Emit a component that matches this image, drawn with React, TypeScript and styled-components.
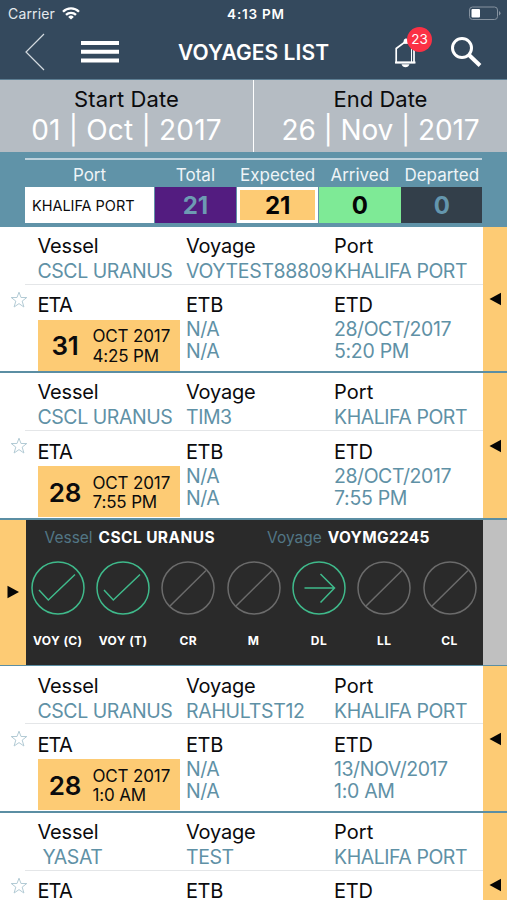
import React from "react";
import styled, { createGlobalStyle, css } from "styled-components";

const GlobalStyle = createGlobalStyle`
  html, body { margin: 0; padding: 0; background: #fff; }
  * { box-sizing: border-box; }
  body { font-family: Inter, Roboto, sans-serif; overflow: hidden; }
`;

const teal = "#6093a8";
const amber = "#fdcb74";

const Screen = styled.div`
  width: 507px;
  height: 900px;
  overflow: hidden;
  background: #fff;
  color: #0b0b0d;
  white-space: nowrap;
`;

const Header = styled.header`
  height: 80px;
  background: #34495d;
  border-bottom: 1px solid #5c7d92;
  color: #fff;
`;

const StatusBar = styled.div`
  display: grid;
  grid-template-columns: 1fr auto 1fr;
  align-items: center;
  height: 27px;
  padding: 0 5px 0 8px;
`;

const Carrier = styled.div`
  display: flex;
  align-items: center;
  gap: 7px;
  font-size: 14px;
  letter-spacing: 0.15px;
  color: #e4e9ee;
`;

const Clock = styled.div`
  font-size: 13.5px;
  font-weight: 600;
  letter-spacing: 0.8px;
  padding-left: 2px;
`;

const BatteryIcon = styled.svg`
  justify-self: end;
`;

const NavBar = styled.div`
  display: flex;
  align-items: center;
  height: 50px;
  padding-left: 24px;
`;

const MenuIcon = styled.svg`
  margin-left: 36px;
`;

const Title = styled.h1`
  margin: 1px 0 0 59px;
  width: 154px;
  font-size: 21px;
  line-height: 26px;
  font-weight: 600;
  letter-spacing: 0.08px;
`;

const BellButton = styled.div`
  position: relative;
  margin-left: 62px;
  width: 24px;
  height: 34px;
`;

const Badge = styled.span`
  position: absolute;
  left: 13px;
  top: -8px;
  width: 25px;
  height: 25px;
  border-radius: 50%;
  background: #fb3145;
  font-size: 13.5px;
  line-height: 25px;
  text-align: center;
`;

const SearchIcon = styled.svg`
  margin-left: 32px;
`;

const DateBar = styled.section`
  display: grid;
  grid-template-columns: 254px 253px;
  height: 72px;
  background: #b5bcc3;
`;

const DateCell = styled.div<{ $divided?: boolean }>`
  padding-top: 5px;
  text-align: center;
  ${(p) => p.$divided && css`border-right: 1.5px solid #fff;`}
`;

const DateLabel = styled.div<{ $track: number }>`
  font-size: 22px;
  line-height: 29px;
  letter-spacing: ${(p) => p.$track}px;
`;

const DateValue = styled.div<{ $track: number }>`
  color: #fff;
  font-size: 28px;
  font-weight: 370;
  line-height: 32px;
  letter-spacing: ${(p) => p.$track}px;
`;

const Summary = styled.section`
  height: 74.6px;
  padding: 6px 25px 0;
  background: ${teal};
`;

const SummaryGrid = styled.div`
  display: grid;
  grid-template-columns: 129px 81.5px 81.5px 81.5px 81px;
  column-gap: 0.7px;
  border-top: 2px solid #bed2dc;
`;

const SummaryLabel = styled.div`
  height: 27px;
  padding-top: 3px;
  color: #eef4f7;
  font-size: 17px;
  line-height: 24px;
  text-align: center;
`;

const PortCell = styled.div`
  height: 36px;
  padding-left: 7px;
  background: #fff;
  font-size: 14.5px;
  letter-spacing: -0.04px;
  line-height: 37px;
`;

const CountCell = styled.div<{ $bg: string; $fg: string; $active?: boolean }>`
  display: flex;
  align-items: center;
  justify-content: center;
  height: 36px;
  background: ${(p) => p.$bg};
  color: ${(p) => p.$fg};
  font-size: 24px;
  font-weight: 700;
  ${(p) => p.$active && css`border: 3px solid #fff;`}
`;

const Row = styled.article`
  display: grid;
  grid-template-columns: 25px 457.5px 24.5px;
  height: 146.6px;
  border-bottom: 2px solid #5b8ea3;
`;

const StarCell = styled.div`
  padding: 64px 0 0 10px;
  line-height: 0;
`;

const RowBody = styled.div``;

const Fields = styled.div<{ $top?: boolean }>`
  display: grid;
  grid-template-columns: 148.5px 148px 1fr;
  height: ${(p) => (p.$top ? 58 : 86)}px;
  padding: ${(p) => (p.$top ? 7.3 : 8.4)}px 0 0 12.5px;
  ${(p) => p.$top && css`border-bottom: 1px solid #e4e6e8;`}
`;

const Field = styled.div`
  min-width: 0;
`;

const FieldLabel = styled.div<{ $track?: number }>`
  font-size: 20px;
  line-height: 25px;
  letter-spacing: ${(p) => p.$track ?? -0.2}px;
`;

const FieldValue = styled.div<{ $track?: number; $indent?: number }>`
  color: #5f91a6;
  font-size: 19.5px;
  font-weight: 370;
  line-height: 24px;
  letter-spacing: ${(p) => p.$track ?? -0.45}px;
  padding-left: ${(p) => p.$indent ?? 0}px;
`;

const TimeValue = styled(FieldValue)`
  line-height: 22px;
`;

const Arrival = styled.div`
  display: grid;
  grid-template-columns: 55px 1fr;
  align-items: center;
  width: 142px;
  height: 51px;
  margin-top: 1.6px;
  background: ${amber};
`;

const Day = styled.div`
  padding-top: 1px;
  text-align: center;
  font-size: 26px;
  font-weight: 600;
  letter-spacing: -0.2px;
`;

const DayTime = styled.div`
  padding-top: 3px;
  font-size: 17px;
  line-height: 19.6px;
  letter-spacing: -0.15px;
`;

const Handle = styled.div<{ $left?: boolean }>`
  background: ${amber};
  padding: ${(p) => (p.$left ? "65.5px 0 0 7px" : "65.5px 0 0 6px")};
  line-height: 0;
`;

const ProgressRow = styled.article`
  display: grid;
  grid-template-columns: 26px 456.5px 24.5px;
  height: 146.6px;
  border-bottom: 1px solid #5b8ea3;
  background: #2a2a2a;
`;

const Spent = styled.div`
  background: #c0c0c0;
`;

const ProgressHead = styled.div`
  display: grid;
  grid-template-columns: 222.5px 1fr;
  padding: 5px 0 0 18.5px;
  height: 38px;
`;

const HeadItem = styled.div`
  display: flex;
  align-items: center;
  gap: 6px;
  height: 26px;
`;

const HeadLabel = styled.span`
  color: #527685;
  font-size: 15.5px;
`;

const HeadValue = styled.span<{ $track: number }>`
  color: #fff;
  font-size: 15.5px;
  font-weight: 700;
  letter-spacing: ${(p) => p.$track}px;
`;

const Steps = styled.div`
  display: grid;
  grid-template-columns: repeat(7, 65.3px);
  margin-left: -0.9px;
`;

const Step = styled.div`
  display: flex;
  flex-direction: column;
  align-items: center;
  padding-top: 3px;
`;

const StepLabel = styled.div`
  margin-top: 17px;
  color: #fff;
  font-size: 12px;
  font-weight: 700;
  line-height: 18px;
  letter-spacing: 0.4px;
`;

type StepKind = "done" | "current" | "none";

const StepIcon = ({ kind }: { kind: StepKind }) => (
  <svg width="54" height="54" viewBox="0 0 54 54" fill="none" strokeWidth="1.5" stroke={kind === "none" ? "#6b6b6b" : "#3fba8b"}>
    <circle cx="27" cy="27" r="26" />
    {kind === "done" && <path d="M8 29l9.3 10L44 13.5" />}
    {kind === "none" && <path d="M9 45L45 9.5" />}
    {kind === "current" && <path d="M12.5 27h29.5M28.5 13L42.5 27l-14 14.5" />}
  </svg>
);

const Star = () => (
  <svg width="18" height="18" viewBox="0 0 18 18" fill="none" stroke="#b3cbd5" strokeWidth="1">
    <path d="M9 1.2l2 5.3h5.8l-4.6 3.6 1.7 5.9L9 12.6 4.1 16l1.7-5.9L1.2 6.5H7z" />
  </svg>
);

const Triangle = ({ right }: { right?: boolean }) => (
  <svg width="12" height="14" viewBox="0 0 12 14" fill="#050505">
    <path d={right ? "M0.5 0.7v12.6L12 7z" : "M12 0.7v12.6L0.5 7z"} />
  </svg>
);

interface Voyage {
  vessel: string;
  indent?: number;
  voyage: string;
  voyageTrack?: number;
  day: string;
  time: string;
  etd: string;
  etdTime: string;
}

const voyages: Voyage[] = [
  { vessel: "CSCL URANUS", voyage: "VOYTEST88809", voyageTrack: -0.35, day: "31", time: "4:25 PM", etd: "28/OCT/2017", etdTime: "5:20 PM" },
  { vessel: "CSCL URANUS", voyage: "TIM3", day: "28", time: "7:55 PM", etd: "28/OCT/2017", etdTime: "7:55 PM" },
  { vessel: "CSCL URANUS", voyage: "RAHULTST12", voyageTrack: -0.3, day: "28", time: "1:0 AM", etd: "13/NOV/2017", etdTime: "1:0 AM" },
  { vessel: "YASAT", indent: 5, voyage: "TEST", day: "28", time: "1:0 AM", etd: "13/NOV/2017", etdTime: "1:0 AM" },
];

const steps: [string, StepKind][] = [
  ["VOY (C)", "done"],
  ["VOY (T)", "done"],
  ["CR", "none"],
  ["M", "none"],
  ["DL", "current"],
  ["LL", "none"],
  ["CL", "none"],
];

const VoyageRow = ({ v }: { v: Voyage }) => (
  <Row>
    <StarCell><Star /></StarCell>
    <RowBody>
      <Fields $top>
        <Field>
          <FieldLabel>Vessel</FieldLabel>
          <FieldValue $indent={v.indent}>{v.vessel}</FieldValue>
        </Field>
        <Field>
          <FieldLabel>Voyage</FieldLabel>
          <FieldValue $track={v.voyageTrack}>{v.voyage}</FieldValue>
        </Field>
        <Field>
          <FieldLabel $track={0.1}>Port</FieldLabel>
          <FieldValue>KHALIFA PORT</FieldValue>
        </Field>
      </Fields>
      <Fields>
        <Field>
          <FieldLabel $track={-0.9}>ETA</FieldLabel>
          <Arrival>
            <Day>{v.day}</Day>
            <DayTime>OCT 2017<br />{v.time}</DayTime>
          </Arrival>
        </Field>
        <Field>
          <FieldLabel $track={-0.4}>ETB</FieldLabel>
          <TimeValue>N/A</TimeValue>
          <TimeValue>N/A</TimeValue>
        </Field>
        <Field>
          <FieldLabel>ETD</FieldLabel>
          <TimeValue>{v.etd}</TimeValue>
          <TimeValue $track={-0.3}>{v.etdTime}</TimeValue>
        </Field>
      </Fields>
    </RowBody>
    <Handle><Triangle /></Handle>
  </Row>
);

export default function App() {
  return (
    <Screen>
      <GlobalStyle />
      <Header>
        <StatusBar>
          <Carrier>
            Carrier
            <svg width="18" height="13" viewBox="0 0 18 13" fill="none" stroke="#fff" strokeWidth="2.3">
              <path d="M1 4.7a11.3 11.3 0 0 1 16 0M4 7.9a7 7 0 0 1 10 0" />
              <path d="M9 12.6L6.2 9.9a4 4 0 0 1 5.6 0z" fill="#fff" stroke="none" />
            </svg>
          </Carrier>
          <Clock>4:13 PM</Clock>
          <BatteryIcon width="34" height="15" viewBox="0 0 34 15" fill="none">
            <rect x="1.500" y="1" width="28" height="12.5" rx="3" stroke="#8693a0" />
            <rect x="3.500" y="3" width="8.500" height="8.500" rx="1" fill="#fff" />
            <path d="M31 5v4.500q1.500-.6 1.500-2.200t-1.500-2.300z" fill="#8693a0" />
          </BatteryIcon>
        </StatusBar>
        <NavBar>
          <svg width="21" height="38" viewBox="0 0 21 38" fill="none" stroke="#d4dae0" strokeWidth="1.2">
            <path d="M20 1L2 19l18 18" />
          </svg>
          <MenuIcon width="38" height="22" viewBox="0 0 38 22" fill="#fff">
            <path d="M0 0h38v4H0zM0 8.7h38v4H0zM0 17.4h38v4H0z" />
          </MenuIcon>
          <Title>VOYAGES LIST</Title>
          <BellButton>
            <svg width="24" height="34" viewBox="0 0 24 34" fill="none" stroke="#fff">
              <path d="M2.200 27.500V13.500L9.500 8h5l5.500 5.500v14z" strokeWidth="1.700" />
              <path d="M9 8.500l1-4 2-1.200 2 1.200 1 4z" fill="#fff" stroke="none" />
              <path d="M17.500 13v14" strokeWidth="1" />
              <path d="M1 27.500h20.500" strokeWidth="2" />
              <path d="M7.500 29.300h8q-1 3-4 3t-4-3z" fill="#fff" stroke="none" />
            </svg>
            <Badge>23</Badge>
          </BellButton>
          <SearchIcon width="32" height="32" viewBox="0 0 32 32" fill="none" stroke="#fff">
            <circle cx="12" cy="12" r="9.5" strokeWidth="3" />
            <path d="M18.5 18.5L30 29.5" strokeWidth="4" />
          </SearchIcon>
        </NavBar>
      </Header>
      <DateBar>
        <DateCell $divided>
          <DateLabel $track={0.1}>Start Date</DateLabel>
          <DateValue $track={0.2}>01 | Oct | 2017</DateValue>
        </DateCell>
        <DateCell>
          <DateLabel $track={0}>End Date</DateLabel>
          <DateValue $track={-0.1}>26 | Nov | 2017</DateValue>
        </DateCell>
      </DateBar>
      <Summary>
        <SummaryGrid>
          <SummaryLabel>Port</SummaryLabel>
          <SummaryLabel>Total</SummaryLabel>
          <SummaryLabel>Expected</SummaryLabel>
          <SummaryLabel>Arrived</SummaryLabel>
          <SummaryLabel>Departed</SummaryLabel>
          <PortCell>KHALIFA PORT</PortCell>
          <CountCell $bg="#531c80" $fg="#6d9bb3">21</CountCell>
          <CountCell $bg={amber} $fg="#050505" $active>21</CountCell>
          <CountCell $bg="#7eea96" $fg="#050505">0</CountCell>
          <CountCell $bg="#333f4a" $fg="#6496ae">0</CountCell>
        </SummaryGrid>
      </Summary>
      <VoyageRow v={voyages[0]} />
      <VoyageRow v={voyages[1]} />
      <ProgressRow>
        <Handle $left><Triangle right /></Handle>
        <div>
          <ProgressHead>
            <HeadItem>
              <HeadLabel>Vessel</HeadLabel>
              <HeadValue $track={0.4}>CSCL URANUS</HeadValue>
            </HeadItem>
            <HeadItem>
              <HeadLabel>Voyage</HeadLabel>
              <HeadValue $track={0.3}>VOYMG2245</HeadValue>
            </HeadItem>
          </ProgressHead>
          <Steps>
            {steps.map(([label, kind]) => (
              <Step key={label}>
                <StepIcon kind={kind} />
                <StepLabel>{label}</StepLabel>
              </Step>
            ))}
          </Steps>
        </div>
        <Spent />
      </ProgressRow>
      <VoyageRow v={voyages[2]} />
      <VoyageRow v={voyages[3]} />
    </Screen>
  );
}
